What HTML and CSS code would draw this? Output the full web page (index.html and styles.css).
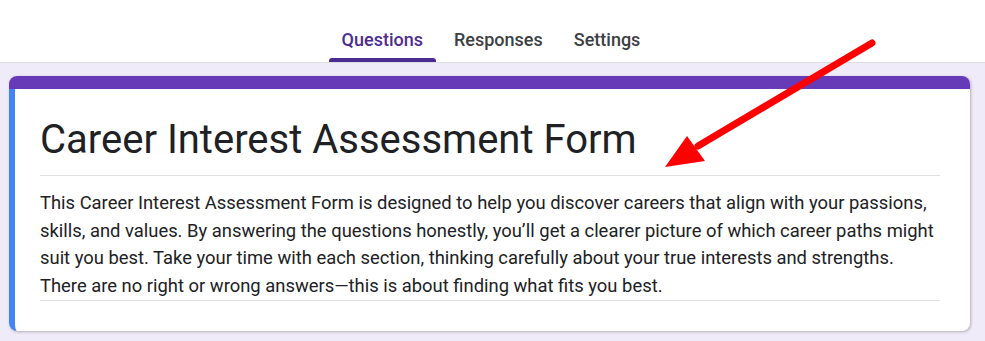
FILE: index.html
```html
<!DOCTYPE html>
<html lang="en">
<head>
<meta charset="utf-8">
<title>Career Interest Assessment Form</title>
<link rel="stylesheet" href="styles.css">
</head>
<body>
<header class="topbar">
  <nav class="tabs">
    <a class="tab active">Questions</a>
    <a class="tab">Responses</a>
    <a class="tab">Settings</a>
  </nav>
</header>
<main class="page">
  <section class="card">
    <div class="card-accent"></div>
    <div class="card-body">
      <h1 class="title">Career Interest Assessment Form</h1>
      <p class="desc">This Career Interest Assessment Form is designed to help you discover careers that align with your passions, skills, and values. By answering the questions honestly, you’ll get a clearer picture of which career paths might suit you best. Take your time with each section, thinking carefully about your true interests and strengths. There are no right or wrong answers—this is about finding what fits you best.</p>
    </div>
  </section>
</main>
<svg class="arrow" width="985" height="341" viewBox="0 0 985 341">
  <line x1="872" y1="43" x2="698" y2="146" stroke="#ff0000" stroke-width="7" stroke-linecap="round"/>
  <polygon points="665,167 687,136 705,161" fill="#ff0000"/>
</svg>
</body>
</html>
```
FILE: styles.css
```css
* { box-sizing: border-box; }
html, body { margin: 0; padding: 0; }
body {
  font-family: Roboto, "Noto Sans", Arial, sans-serif;
  background: #f0ebf8;
  color: #202124;
  width: 985px;
  height: 341px;
  overflow: hidden;
  position: relative;
}
.topbar {
  background: #fff;
  height: 63px;
  border-bottom: 1px solid #dadce0;
  display: flex;
  justify-content: center;
  align-items: flex-end;
}
.tabs {
  display: flex;
  gap: 5px;
  margin-left: -3px;
}
.tab {
  font-size: 18px;
  font-weight: 500;
  color: #3c4043;
  padding: 0 13px;
  height: 62px;
  line-height: 1;
  display: flex;
  align-items: flex-start;
  padding-top: 31px;
  position: relative;
}
.tab.active { color: #4c2c92; }
.tab.active::after {
  content: "";
  position: absolute;
  left: 0; right: 0; bottom: 0;
  height: 4px;
  background: #4c2c92;
  border-radius: 3px 3px 0 0;
}
.page {
  padding: 13px 15px 0 9px;
}
.card {
  border-radius: 8px;
  background: #fff;
  box-shadow: 1px 1px 3px rgba(60,64,67,.35);
}
.card-accent {
  height: 13px;
  background: #673ab7;
  border-radius: 8px 8px 0 0;
}
.card-body {
  border-left: 6px solid #4285f4;
  border-radius: 0 0 0 8px;
  padding: 27px 30px 30px 25px;
}
.title {
  margin: 0;
  font-size: 40px;
  font-weight: 400;
  line-height: 48px;
  padding-bottom: 11px;
  border-bottom: 1px solid #e0e0e0;
  color: #202124;
}
.desc {
  margin: 0;
  padding-top: 13px;
  padding-bottom: 1px;
  font-size: 18.4px;
  line-height: 27.5px;
  color: #202124;
  border-bottom: 1px solid #e0e0e0;
}
.arrow {
  position: absolute;
  left: 0;
  top: 0;
  pointer-events: none;
}
```
